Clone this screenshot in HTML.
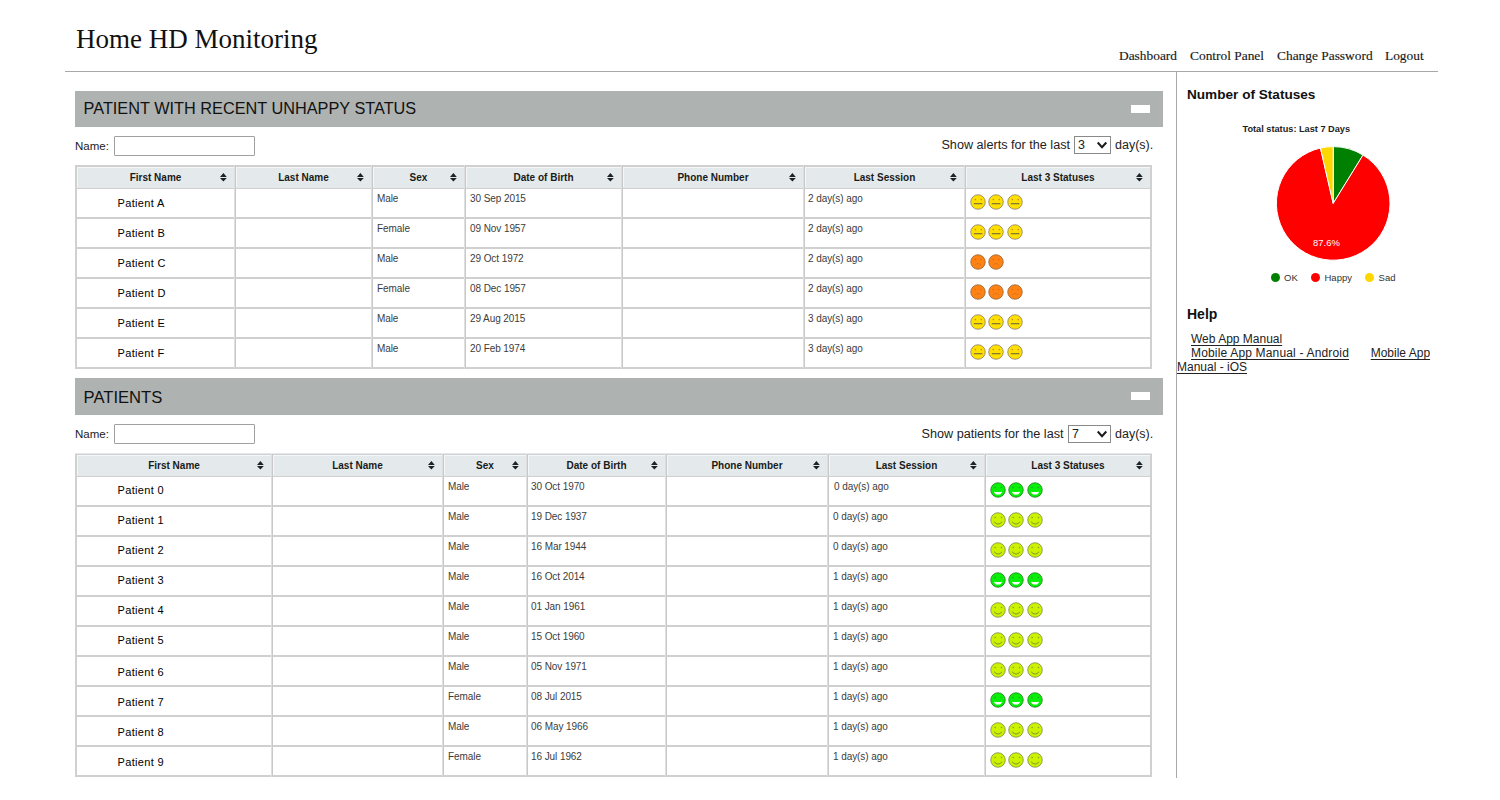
<!DOCTYPE html>
<html><head><meta charset="utf-8"><title>Home HD Monitoring</title>
<style>
html,body{margin:0;padding:0;background:#fff;}
body{width:1500px;height:800px;position:relative;overflow:hidden;}
.t{position:absolute;white-space:nowrap;}
.b{position:absolute;}
u{text-decoration:underline;text-underline-offset:1.5px;text-decoration-skip-ink:none;text-decoration-thickness:1px;}
</style></head><body>
<svg width="0" height="0" style="position:absolute"><defs>
<g id="en"><circle cx="8" cy="8" r="7.25" fill="#ffe000" stroke="#8c7c70" stroke-width="0.8"/><circle cx="5.3" cy="5.6" r="0.8" fill="#c88a3a"/><circle cx="11.3" cy="5.6" r="0.8" fill="#c88a3a"/><path d="M3.8 9.7h8.6" stroke="#6f6a3a" stroke-width="1.1"/></g>
<g id="es"><circle cx="8" cy="8" r="7.25" fill="#ff8212" stroke="#8f6440" stroke-width="0.8"/><circle cx="5.3" cy="5.5" r="0.7" fill="#c46a2a"/><circle cx="11" cy="5.5" r="0.7" fill="#c46a2a"/><path d="M4.8 11.2Q8 7.9 11.2 11.2" fill="none" stroke="#c87434" stroke-width="0.8"/></g>
<g id="eg"><circle cx="8" cy="8" r="7.25" fill="#08f008" stroke="#2a7a2a" stroke-width="0.8"/><circle cx="5" cy="5.5" r="0.8" fill="#2aa02a"/><circle cx="11.4" cy="5.5" r="0.8" fill="#2aa02a"/><path d="M3.9 9.7Q8 10.3 12.1 9.7Q11.2 12.6 8 12.6Q4.8 12.6 3.9 9.7Z" fill="#fff"/></g>
<g id="em"><circle cx="8" cy="8" r="7.25" fill="#ccf200" stroke="#7a8a50" stroke-width="0.8"/><circle cx="5.1" cy="5.4" r="0.75" fill="#8a9a30"/><circle cx="11.5" cy="5.4" r="0.75" fill="#8a9a30"/><path d="M4.1 9.8Q8 14.4 12.1 9.8" fill="none" stroke="#7a8a40" stroke-width="0.9"/></g>
</defs></svg>
<div class="t" style="left:76.00px;top:19.89px;font-family:'Liberation Serif', serif;font-size:27px;line-height:38px;font-weight:normal;color:#111;">Home HD Monitoring</div>
<div class="t" style="left:1119.00px;top:45.98px;font-family:'Liberation Serif', serif;font-size:13.4px;line-height:19px;font-weight:normal;color:#1a1a1a;-webkit-text-stroke:0.15px #1a1a1a;">Dashboard</div>
<div class="t" style="left:1190.00px;top:45.98px;font-family:'Liberation Serif', serif;font-size:13.4px;line-height:19px;font-weight:normal;color:#1a1a1a;-webkit-text-stroke:0.15px #1a1a1a;">Control Panel</div>
<div class="t" style="left:1277.00px;top:45.98px;font-family:'Liberation Serif', serif;font-size:13.4px;line-height:19px;font-weight:normal;color:#1a1a1a;-webkit-text-stroke:0.15px #1a1a1a;">Change Password</div>
<div class="t" style="left:1385.00px;top:45.98px;font-family:'Liberation Serif', serif;font-size:13.4px;line-height:19px;font-weight:normal;color:#1a1a1a;-webkit-text-stroke:0.15px #1a1a1a;">Logout</div>
<div class="b" style="left:65px;top:71px;width:1373px;height:1px;background:#a8a8a8"></div>
<div class="b" style="left:1176px;top:72px;width:1px;height:706px;background:#a8a8a8"></div>
<div class="b" style="left:75px;top:91px;width:1088px;height:36px;background:#aeb2b1"></div>
<div class="t" style="left:83.60px;top:97.05px;font-family:'Liberation Sans', sans-serif;font-size:16.3px;line-height:23px;font-weight:normal;color:#111;">PATIENT WITH RECENT UNHAPPY STATUS</div>
<div class="b" style="left:1131px;top:105px;width:19px;height:8px;background:#fff"></div>
<div class="t" style="left:75.00px;top:138.02px;font-family:'Liberation Sans', sans-serif;font-size:11.5px;line-height:16px;font-weight:normal;color:#222;">Name:</div>
<div class="b" style="left:114px;top:136px;width:141px;height:20px;border:1px solid #a0a0a0;box-sizing:border-box;border-radius:1px;background:#fff"></div>
<div class="t" style="right:430.00px;top:135.82px;font-family:'Liberation Sans', sans-serif;font-size:12.65px;line-height:18px;font-weight:normal;color:#222;">Show alerts for the last</div>
<div class="b" style="left:1074px;top:136px;width:37px;height:18px;border:1px solid #8a8a8a;box-sizing:border-box;background:#fff"></div>
<div class="t" style="left:1078.00px;top:136.17px;font-family:'Liberation Sans', sans-serif;font-size:12.5px;line-height:18px;font-weight:normal;color:#222;">3</div>
<svg class="b" style="left:1097px;top:141px" width="11" height="8" viewBox="0 0 11 8"><path d="M0.7 1.5L5 6.2L9.3 1.5" fill="none" stroke="#1a1a1a" stroke-width="2"/></svg>
<div class="t" style="left:1115.00px;top:135.87px;font-family:'Liberation Sans', sans-serif;font-size:12.5px;line-height:18px;font-weight:normal;color:#222;">day(s).</div>
<div class="b" style="left:75px;top:165px;width:1077px;height:24px;background:#e4eaeb"></div>
<div class="b" style="left:77px;top:167px;width:1px;height:20px;background:#f4f7f7"></div>
<div class="b" style="left:236px;top:167px;width:1px;height:20px;background:#f4f7f7"></div>
<div class="b" style="left:373px;top:167px;width:1px;height:20px;background:#f4f7f7"></div>
<div class="b" style="left:466px;top:167px;width:1px;height:20px;background:#f4f7f7"></div>
<div class="b" style="left:623px;top:167px;width:1px;height:20px;background:#f4f7f7"></div>
<div class="b" style="left:805px;top:167px;width:1px;height:20px;background:#f4f7f7"></div>
<div class="b" style="left:966px;top:167px;width:1px;height:20px;background:#f4f7f7"></div>
<div class="b" style="left:77px;top:167px;width:1073px;height:1px;background:#f4f7f7"></div>
<div class="b" style="left:75px;top:165px;width:1077px;height:2px;background:#d0d0d0"></div>
<div class="b" style="left:75px;top:188px;width:1077px;height:1px;background:#d0d0d0"></div>
<div class="b" style="left:75px;top:217px;width:1077px;height:2px;background:#d0d0d0"></div>
<div class="b" style="left:75px;top:247px;width:1077px;height:2px;background:#d0d0d0"></div>
<div class="b" style="left:75px;top:277px;width:1077px;height:2px;background:#d0d0d0"></div>
<div class="b" style="left:75px;top:307px;width:1077px;height:2px;background:#d0d0d0"></div>
<div class="b" style="left:75px;top:337px;width:1077px;height:2px;background:#d0d0d0"></div>
<div class="b" style="left:75px;top:367px;width:1077px;height:2px;background:#d0d0d0"></div>
<div class="b" style="left:75px;top:165px;width:2px;height:204px;background:#d0d0d0"></div>
<div class="b" style="left:234px;top:165px;width:1px;height:204px;background:#dedede"></div>
<div class="b" style="left:235px;top:165px;width:1px;height:204px;background:#c9c9c9"></div>
<div class="b" style="left:371px;top:165px;width:1px;height:204px;background:#dedede"></div>
<div class="b" style="left:372px;top:165px;width:1px;height:204px;background:#c9c9c9"></div>
<div class="b" style="left:464px;top:165px;width:1px;height:204px;background:#dedede"></div>
<div class="b" style="left:465px;top:165px;width:1px;height:204px;background:#c9c9c9"></div>
<div class="b" style="left:621px;top:165px;width:1px;height:204px;background:#dedede"></div>
<div class="b" style="left:622px;top:165px;width:1px;height:204px;background:#c9c9c9"></div>
<div class="b" style="left:803px;top:165px;width:1px;height:204px;background:#dedede"></div>
<div class="b" style="left:804px;top:165px;width:1px;height:204px;background:#c9c9c9"></div>
<div class="b" style="left:964px;top:165px;width:1px;height:204px;background:#dedede"></div>
<div class="b" style="left:965px;top:165px;width:1px;height:204px;background:#c9c9c9"></div>
<div class="b" style="left:1150px;top:165px;width:2px;height:204px;background:#d0d0d0"></div>
<div class="t" style="left:77.00px;width:157px;text-align:center;top:170.53px;font-family:'Liberation Sans', sans-serif;font-size:10px;line-height:14px;font-weight:bold;color:#1a1a1a;">First Name</div>
<svg class="b" style="left:220px;top:173px" width="8" height="9" viewBox="0 0 8 9"><path d="M0 4.1L3.4 0L6.8 4.1Z M0 5L3.4 8.4L6.8 5Z" fill="#1c2326"/></svg>
<div class="t" style="left:236.00px;width:135px;text-align:center;top:170.53px;font-family:'Liberation Sans', sans-serif;font-size:10px;line-height:14px;font-weight:bold;color:#1a1a1a;">Last Name</div>
<svg class="b" style="left:357px;top:173px" width="8" height="9" viewBox="0 0 8 9"><path d="M0 4.1L3.4 0L6.8 4.1Z M0 5L3.4 8.4L6.8 5Z" fill="#1c2326"/></svg>
<div class="t" style="left:373.00px;width:91px;text-align:center;top:170.53px;font-family:'Liberation Sans', sans-serif;font-size:10px;line-height:14px;font-weight:bold;color:#1a1a1a;">Sex</div>
<svg class="b" style="left:450px;top:173px" width="8" height="9" viewBox="0 0 8 9"><path d="M0 4.1L3.4 0L6.8 4.1Z M0 5L3.4 8.4L6.8 5Z" fill="#1c2326"/></svg>
<div class="t" style="left:466.00px;width:155px;text-align:center;top:170.53px;font-family:'Liberation Sans', sans-serif;font-size:10px;line-height:14px;font-weight:bold;color:#1a1a1a;">Date of Birth</div>
<svg class="b" style="left:607px;top:173px" width="8" height="9" viewBox="0 0 8 9"><path d="M0 4.1L3.4 0L6.8 4.1Z M0 5L3.4 8.4L6.8 5Z" fill="#1c2326"/></svg>
<div class="t" style="left:623.00px;width:180px;text-align:center;top:170.53px;font-family:'Liberation Sans', sans-serif;font-size:10px;line-height:14px;font-weight:bold;color:#1a1a1a;">Phone Number</div>
<svg class="b" style="left:789px;top:173px" width="8" height="9" viewBox="0 0 8 9"><path d="M0 4.1L3.4 0L6.8 4.1Z M0 5L3.4 8.4L6.8 5Z" fill="#1c2326"/></svg>
<div class="t" style="left:805.00px;width:159px;text-align:center;top:170.53px;font-family:'Liberation Sans', sans-serif;font-size:10px;line-height:14px;font-weight:bold;color:#1a1a1a;">Last Session</div>
<svg class="b" style="left:950px;top:173px" width="8" height="9" viewBox="0 0 8 9"><path d="M0 4.1L3.4 0L6.8 4.1Z M0 5L3.4 8.4L6.8 5Z" fill="#1c2326"/></svg>
<div class="t" style="left:966.00px;width:184px;text-align:center;top:170.53px;font-family:'Liberation Sans', sans-serif;font-size:10px;line-height:14px;font-weight:bold;color:#1a1a1a;">Last 3 Statuses</div>
<svg class="b" style="left:1136px;top:173px" width="8" height="9" viewBox="0 0 8 9"><path d="M0 4.1L3.4 0L6.8 4.1Z M0 5L3.4 8.4L6.8 5Z" fill="#1c2326"/></svg>
<div class="t" style="left:117.50px;top:196.19px;font-family:'Liberation Sans', sans-serif;font-size:11px;line-height:15px;font-weight:normal;color:#000;letter-spacing:0.35px;">Patient A</div>
<div class="t" style="left:377.00px;top:191.53px;font-family:'Liberation Sans', sans-serif;font-size:10px;line-height:14px;font-weight:normal;color:#3c3c3c;letter-spacing:-0.08px;">Male</div>
<div class="t" style="left:470.00px;top:191.53px;font-family:'Liberation Sans', sans-serif;font-size:10px;line-height:14px;font-weight:normal;color:#3c3c3c;letter-spacing:-0.08px;">30 Sep 2015</div>
<div class="t" style="left:808.00px;top:191.53px;font-family:'Liberation Sans', sans-serif;font-size:10px;line-height:14px;font-weight:normal;color:#3c3c3c;letter-spacing:-0.08px;">2 day(s) ago</div>
<svg class="b" style="left:970.0px;top:194px" width="16" height="16" viewBox="0 0 16 16"><use href="#en"/></svg>
<svg class="b" style="left:988.4px;top:194px" width="16" height="16" viewBox="0 0 16 16"><use href="#en"/></svg>
<svg class="b" style="left:1006.8px;top:194px" width="16" height="16" viewBox="0 0 16 16"><use href="#en"/></svg>
<div class="t" style="left:117.50px;top:226.19px;font-family:'Liberation Sans', sans-serif;font-size:11px;line-height:15px;font-weight:normal;color:#000;letter-spacing:0.35px;">Patient B</div>
<div class="t" style="left:377.00px;top:221.53px;font-family:'Liberation Sans', sans-serif;font-size:10px;line-height:14px;font-weight:normal;color:#3c3c3c;letter-spacing:-0.08px;">Female</div>
<div class="t" style="left:470.00px;top:221.53px;font-family:'Liberation Sans', sans-serif;font-size:10px;line-height:14px;font-weight:normal;color:#3c3c3c;letter-spacing:-0.08px;">09 Nov 1957</div>
<div class="t" style="left:808.00px;top:221.53px;font-family:'Liberation Sans', sans-serif;font-size:10px;line-height:14px;font-weight:normal;color:#3c3c3c;letter-spacing:-0.08px;">2 day(s) ago</div>
<svg class="b" style="left:970.0px;top:224px" width="16" height="16" viewBox="0 0 16 16"><use href="#en"/></svg>
<svg class="b" style="left:988.4px;top:224px" width="16" height="16" viewBox="0 0 16 16"><use href="#en"/></svg>
<svg class="b" style="left:1006.8px;top:224px" width="16" height="16" viewBox="0 0 16 16"><use href="#en"/></svg>
<div class="t" style="left:117.50px;top:256.19px;font-family:'Liberation Sans', sans-serif;font-size:11px;line-height:15px;font-weight:normal;color:#000;letter-spacing:0.35px;">Patient C</div>
<div class="t" style="left:377.00px;top:251.53px;font-family:'Liberation Sans', sans-serif;font-size:10px;line-height:14px;font-weight:normal;color:#3c3c3c;letter-spacing:-0.08px;">Male</div>
<div class="t" style="left:470.00px;top:251.53px;font-family:'Liberation Sans', sans-serif;font-size:10px;line-height:14px;font-weight:normal;color:#3c3c3c;letter-spacing:-0.08px;">29 Oct 1972</div>
<div class="t" style="left:808.00px;top:251.53px;font-family:'Liberation Sans', sans-serif;font-size:10px;line-height:14px;font-weight:normal;color:#3c3c3c;letter-spacing:-0.08px;">2 day(s) ago</div>
<svg class="b" style="left:970.0px;top:254px" width="16" height="16" viewBox="0 0 16 16"><use href="#es"/></svg>
<svg class="b" style="left:988.4px;top:254px" width="16" height="16" viewBox="0 0 16 16"><use href="#es"/></svg>
<div class="t" style="left:117.50px;top:286.19px;font-family:'Liberation Sans', sans-serif;font-size:11px;line-height:15px;font-weight:normal;color:#000;letter-spacing:0.35px;">Patient D</div>
<div class="t" style="left:377.00px;top:281.54px;font-family:'Liberation Sans', sans-serif;font-size:10px;line-height:14px;font-weight:normal;color:#3c3c3c;letter-spacing:-0.08px;">Female</div>
<div class="t" style="left:470.00px;top:281.54px;font-family:'Liberation Sans', sans-serif;font-size:10px;line-height:14px;font-weight:normal;color:#3c3c3c;letter-spacing:-0.08px;">08 Dec 1957</div>
<div class="t" style="left:808.00px;top:281.54px;font-family:'Liberation Sans', sans-serif;font-size:10px;line-height:14px;font-weight:normal;color:#3c3c3c;letter-spacing:-0.08px;">2 day(s) ago</div>
<svg class="b" style="left:970.0px;top:284px" width="16" height="16" viewBox="0 0 16 16"><use href="#es"/></svg>
<svg class="b" style="left:988.4px;top:284px" width="16" height="16" viewBox="0 0 16 16"><use href="#es"/></svg>
<svg class="b" style="left:1006.8px;top:284px" width="16" height="16" viewBox="0 0 16 16"><use href="#es"/></svg>
<div class="t" style="left:117.50px;top:316.19px;font-family:'Liberation Sans', sans-serif;font-size:11px;line-height:15px;font-weight:normal;color:#000;letter-spacing:0.35px;">Patient E</div>
<div class="t" style="left:377.00px;top:311.54px;font-family:'Liberation Sans', sans-serif;font-size:10px;line-height:14px;font-weight:normal;color:#3c3c3c;letter-spacing:-0.08px;">Male</div>
<div class="t" style="left:470.00px;top:311.54px;font-family:'Liberation Sans', sans-serif;font-size:10px;line-height:14px;font-weight:normal;color:#3c3c3c;letter-spacing:-0.08px;">29 Aug 2015</div>
<div class="t" style="left:808.00px;top:311.54px;font-family:'Liberation Sans', sans-serif;font-size:10px;line-height:14px;font-weight:normal;color:#3c3c3c;letter-spacing:-0.08px;">3 day(s) ago</div>
<svg class="b" style="left:970.0px;top:314px" width="16" height="16" viewBox="0 0 16 16"><use href="#en"/></svg>
<svg class="b" style="left:988.4px;top:314px" width="16" height="16" viewBox="0 0 16 16"><use href="#en"/></svg>
<svg class="b" style="left:1006.8px;top:314px" width="16" height="16" viewBox="0 0 16 16"><use href="#en"/></svg>
<div class="t" style="left:117.50px;top:346.19px;font-family:'Liberation Sans', sans-serif;font-size:11px;line-height:15px;font-weight:normal;color:#000;letter-spacing:0.35px;">Patient F</div>
<div class="t" style="left:377.00px;top:341.54px;font-family:'Liberation Sans', sans-serif;font-size:10px;line-height:14px;font-weight:normal;color:#3c3c3c;letter-spacing:-0.08px;">Male</div>
<div class="t" style="left:470.00px;top:341.54px;font-family:'Liberation Sans', sans-serif;font-size:10px;line-height:14px;font-weight:normal;color:#3c3c3c;letter-spacing:-0.08px;">20 Feb 1974</div>
<div class="t" style="left:808.00px;top:341.54px;font-family:'Liberation Sans', sans-serif;font-size:10px;line-height:14px;font-weight:normal;color:#3c3c3c;letter-spacing:-0.08px;">3 day(s) ago</div>
<svg class="b" style="left:970.0px;top:344px" width="16" height="16" viewBox="0 0 16 16"><use href="#en"/></svg>
<svg class="b" style="left:988.4px;top:344px" width="16" height="16" viewBox="0 0 16 16"><use href="#en"/></svg>
<svg class="b" style="left:1006.8px;top:344px" width="16" height="16" viewBox="0 0 16 16"><use href="#en"/></svg>
<div class="b" style="left:75px;top:378px;width:1088px;height:37px;background:#aeb2b1"></div>
<div class="t" style="left:83.60px;top:385.55px;font-family:'Liberation Sans', sans-serif;font-size:16.6px;line-height:23px;font-weight:normal;color:#111;">PATIENTS</div>
<div class="b" style="left:1131px;top:392px;width:19px;height:8px;background:#fff"></div>
<div class="t" style="left:75.00px;top:426.02px;font-family:'Liberation Sans', sans-serif;font-size:11.5px;line-height:16px;font-weight:normal;color:#222;">Name:</div>
<div class="b" style="left:114px;top:424px;width:141px;height:20px;border:1px solid #a0a0a0;box-sizing:border-box;border-radius:1px;background:#fff"></div>
<div class="t" style="right:436.50px;top:424.62px;font-family:'Liberation Sans', sans-serif;font-size:12.65px;line-height:18px;font-weight:normal;color:#222;">Show patients for the last</div>
<div class="b" style="left:1068px;top:425px;width:43px;height:18px;border:1px solid #8a8a8a;box-sizing:border-box;background:#fff"></div>
<div class="t" style="left:1072.00px;top:425.17px;font-family:'Liberation Sans', sans-serif;font-size:12.5px;line-height:18px;font-weight:normal;color:#222;">7</div>
<svg class="b" style="left:1097px;top:430px" width="11" height="8" viewBox="0 0 11 8"><path d="M0.7 1.5L5 6.2L9.3 1.5" fill="none" stroke="#1a1a1a" stroke-width="2"/></svg>
<div class="t" style="left:1115.00px;top:424.67px;font-family:'Liberation Sans', sans-serif;font-size:12.5px;line-height:18px;font-weight:normal;color:#222;">day(s).</div>
<div class="b" style="left:75px;top:453px;width:1077px;height:24px;background:#e4eaeb"></div>
<div class="b" style="left:77px;top:455px;width:1px;height:20px;background:#f4f7f7"></div>
<div class="b" style="left:273px;top:455px;width:1px;height:20px;background:#f4f7f7"></div>
<div class="b" style="left:444px;top:455px;width:1px;height:20px;background:#f4f7f7"></div>
<div class="b" style="left:528px;top:455px;width:1px;height:20px;background:#f4f7f7"></div>
<div class="b" style="left:667px;top:455px;width:1px;height:20px;background:#f4f7f7"></div>
<div class="b" style="left:829px;top:455px;width:1px;height:20px;background:#f4f7f7"></div>
<div class="b" style="left:986px;top:455px;width:1px;height:20px;background:#f4f7f7"></div>
<div class="b" style="left:77px;top:455px;width:1073px;height:1px;background:#f4f7f7"></div>
<div class="b" style="left:75px;top:454px;width:1077px;height:1px;background:#d0d0d0"></div>
<div class="b" style="left:75px;top:476px;width:1077px;height:1px;background:#d0d0d0"></div>
<div class="b" style="left:75px;top:505px;width:1077px;height:2px;background:#d0d0d0"></div>
<div class="b" style="left:75px;top:535px;width:1077px;height:2px;background:#d0d0d0"></div>
<div class="b" style="left:75px;top:565px;width:1077px;height:2px;background:#d0d0d0"></div>
<div class="b" style="left:75px;top:595px;width:1077px;height:2px;background:#d0d0d0"></div>
<div class="b" style="left:75px;top:625px;width:1077px;height:2px;background:#d0d0d0"></div>
<div class="b" style="left:75px;top:655px;width:1077px;height:2px;background:#d0d0d0"></div>
<div class="b" style="left:75px;top:685px;width:1077px;height:2px;background:#d0d0d0"></div>
<div class="b" style="left:75px;top:715px;width:1077px;height:2px;background:#d0d0d0"></div>
<div class="b" style="left:75px;top:745px;width:1077px;height:2px;background:#d0d0d0"></div>
<div class="b" style="left:75px;top:775px;width:1077px;height:2px;background:#d0d0d0"></div>
<div class="b" style="left:75px;top:454px;width:2px;height:323px;background:#d0d0d0"></div>
<div class="b" style="left:271px;top:454px;width:1px;height:323px;background:#dedede"></div>
<div class="b" style="left:272px;top:454px;width:1px;height:323px;background:#c9c9c9"></div>
<div class="b" style="left:442px;top:454px;width:1px;height:323px;background:#dedede"></div>
<div class="b" style="left:443px;top:454px;width:1px;height:323px;background:#c9c9c9"></div>
<div class="b" style="left:526px;top:454px;width:1px;height:323px;background:#dedede"></div>
<div class="b" style="left:527px;top:454px;width:1px;height:323px;background:#c9c9c9"></div>
<div class="b" style="left:665px;top:454px;width:1px;height:323px;background:#dedede"></div>
<div class="b" style="left:666px;top:454px;width:1px;height:323px;background:#c9c9c9"></div>
<div class="b" style="left:827px;top:454px;width:1px;height:323px;background:#dedede"></div>
<div class="b" style="left:828px;top:454px;width:1px;height:323px;background:#c9c9c9"></div>
<div class="b" style="left:984px;top:454px;width:1px;height:323px;background:#dedede"></div>
<div class="b" style="left:985px;top:454px;width:1px;height:323px;background:#c9c9c9"></div>
<div class="b" style="left:1150px;top:454px;width:2px;height:323px;background:#d0d0d0"></div>
<div class="t" style="left:77.00px;width:194px;text-align:center;top:458.54px;font-family:'Liberation Sans', sans-serif;font-size:10px;line-height:14px;font-weight:bold;color:#1a1a1a;">First Name</div>
<svg class="b" style="left:257px;top:461px" width="8" height="9" viewBox="0 0 8 9"><path d="M0 4.1L3.4 0L6.8 4.1Z M0 5L3.4 8.4L6.8 5Z" fill="#1c2326"/></svg>
<div class="t" style="left:273.00px;width:169px;text-align:center;top:458.54px;font-family:'Liberation Sans', sans-serif;font-size:10px;line-height:14px;font-weight:bold;color:#1a1a1a;">Last Name</div>
<svg class="b" style="left:428px;top:461px" width="8" height="9" viewBox="0 0 8 9"><path d="M0 4.1L3.4 0L6.8 4.1Z M0 5L3.4 8.4L6.8 5Z" fill="#1c2326"/></svg>
<div class="t" style="left:444.00px;width:82px;text-align:center;top:458.54px;font-family:'Liberation Sans', sans-serif;font-size:10px;line-height:14px;font-weight:bold;color:#1a1a1a;">Sex</div>
<svg class="b" style="left:512px;top:461px" width="8" height="9" viewBox="0 0 8 9"><path d="M0 4.1L3.4 0L6.8 4.1Z M0 5L3.4 8.4L6.8 5Z" fill="#1c2326"/></svg>
<div class="t" style="left:528.00px;width:137px;text-align:center;top:458.54px;font-family:'Liberation Sans', sans-serif;font-size:10px;line-height:14px;font-weight:bold;color:#1a1a1a;">Date of Birth</div>
<svg class="b" style="left:651px;top:461px" width="8" height="9" viewBox="0 0 8 9"><path d="M0 4.1L3.4 0L6.8 4.1Z M0 5L3.4 8.4L6.8 5Z" fill="#1c2326"/></svg>
<div class="t" style="left:667.00px;width:160px;text-align:center;top:458.54px;font-family:'Liberation Sans', sans-serif;font-size:10px;line-height:14px;font-weight:bold;color:#1a1a1a;">Phone Number</div>
<svg class="b" style="left:813px;top:461px" width="8" height="9" viewBox="0 0 8 9"><path d="M0 4.1L3.4 0L6.8 4.1Z M0 5L3.4 8.4L6.8 5Z" fill="#1c2326"/></svg>
<div class="t" style="left:829.00px;width:155px;text-align:center;top:458.54px;font-family:'Liberation Sans', sans-serif;font-size:10px;line-height:14px;font-weight:bold;color:#1a1a1a;">Last Session</div>
<svg class="b" style="left:970px;top:461px" width="8" height="9" viewBox="0 0 8 9"><path d="M0 4.1L3.4 0L6.8 4.1Z M0 5L3.4 8.4L6.8 5Z" fill="#1c2326"/></svg>
<div class="t" style="left:986.00px;width:164px;text-align:center;top:458.54px;font-family:'Liberation Sans', sans-serif;font-size:10px;line-height:14px;font-weight:bold;color:#1a1a1a;">Last 3 Statuses</div>
<svg class="b" style="left:1136px;top:461px" width="8" height="9" viewBox="0 0 8 9"><path d="M0 4.1L3.4 0L6.8 4.1Z M0 5L3.4 8.4L6.8 5Z" fill="#1c2326"/></svg>
<div class="t" style="left:117.50px;top:483.19px;font-family:'Liberation Sans', sans-serif;font-size:11px;line-height:15px;font-weight:normal;color:#000;letter-spacing:0.35px;">Patient 0</div>
<div class="t" style="left:448.00px;top:479.54px;font-family:'Liberation Sans', sans-serif;font-size:10px;line-height:14px;font-weight:normal;color:#3c3c3c;letter-spacing:-0.08px;">Male</div>
<div class="t" style="left:531.00px;top:479.54px;font-family:'Liberation Sans', sans-serif;font-size:10px;line-height:14px;font-weight:normal;color:#3c3c3c;letter-spacing:-0.08px;">30 Oct 1970</div>
<div class="t" style="left:834.00px;top:479.54px;font-family:'Liberation Sans', sans-serif;font-size:10px;line-height:14px;font-weight:normal;color:#3c3c3c;letter-spacing:-0.08px;">0 day(s) ago</div>
<svg class="b" style="left:990.0px;top:482px" width="16" height="16" viewBox="0 0 16 16"><use href="#eg"/></svg>
<svg class="b" style="left:1008.4px;top:482px" width="16" height="16" viewBox="0 0 16 16"><use href="#eg"/></svg>
<svg class="b" style="left:1026.8px;top:482px" width="16" height="16" viewBox="0 0 16 16"><use href="#eg"/></svg>
<div class="t" style="left:117.50px;top:513.19px;font-family:'Liberation Sans', sans-serif;font-size:11px;line-height:15px;font-weight:normal;color:#000;letter-spacing:0.35px;">Patient 1</div>
<div class="t" style="left:448.00px;top:509.54px;font-family:'Liberation Sans', sans-serif;font-size:10px;line-height:14px;font-weight:normal;color:#3c3c3c;letter-spacing:-0.08px;">Male</div>
<div class="t" style="left:531.00px;top:509.54px;font-family:'Liberation Sans', sans-serif;font-size:10px;line-height:14px;font-weight:normal;color:#3c3c3c;letter-spacing:-0.08px;">19 Dec 1937</div>
<div class="t" style="left:833.00px;top:509.54px;font-family:'Liberation Sans', sans-serif;font-size:10px;line-height:14px;font-weight:normal;color:#3c3c3c;letter-spacing:-0.08px;">0 day(s) ago</div>
<svg class="b" style="left:990.0px;top:512px" width="16" height="16" viewBox="0 0 16 16"><use href="#em"/></svg>
<svg class="b" style="left:1008.4px;top:512px" width="16" height="16" viewBox="0 0 16 16"><use href="#em"/></svg>
<svg class="b" style="left:1026.8px;top:512px" width="16" height="16" viewBox="0 0 16 16"><use href="#em"/></svg>
<div class="t" style="left:117.50px;top:543.19px;font-family:'Liberation Sans', sans-serif;font-size:11px;line-height:15px;font-weight:normal;color:#000;letter-spacing:0.35px;">Patient 2</div>
<div class="t" style="left:448.00px;top:539.53px;font-family:'Liberation Sans', sans-serif;font-size:10px;line-height:14px;font-weight:normal;color:#3c3c3c;letter-spacing:-0.08px;">Male</div>
<div class="t" style="left:531.00px;top:539.53px;font-family:'Liberation Sans', sans-serif;font-size:10px;line-height:14px;font-weight:normal;color:#3c3c3c;letter-spacing:-0.08px;">16 Mar 1944</div>
<div class="t" style="left:833.00px;top:539.53px;font-family:'Liberation Sans', sans-serif;font-size:10px;line-height:14px;font-weight:normal;color:#3c3c3c;letter-spacing:-0.08px;">0 day(s) ago</div>
<svg class="b" style="left:990.0px;top:542px" width="16" height="16" viewBox="0 0 16 16"><use href="#em"/></svg>
<svg class="b" style="left:1008.4px;top:542px" width="16" height="16" viewBox="0 0 16 16"><use href="#em"/></svg>
<svg class="b" style="left:1026.8px;top:542px" width="16" height="16" viewBox="0 0 16 16"><use href="#em"/></svg>
<div class="t" style="left:117.50px;top:573.19px;font-family:'Liberation Sans', sans-serif;font-size:11px;line-height:15px;font-weight:normal;color:#000;letter-spacing:0.35px;">Patient 3</div>
<div class="t" style="left:448.00px;top:569.53px;font-family:'Liberation Sans', sans-serif;font-size:10px;line-height:14px;font-weight:normal;color:#3c3c3c;letter-spacing:-0.08px;">Male</div>
<div class="t" style="left:531.00px;top:569.53px;font-family:'Liberation Sans', sans-serif;font-size:10px;line-height:14px;font-weight:normal;color:#3c3c3c;letter-spacing:-0.08px;">16 Oct 2014</div>
<div class="t" style="left:833.00px;top:569.53px;font-family:'Liberation Sans', sans-serif;font-size:10px;line-height:14px;font-weight:normal;color:#3c3c3c;letter-spacing:-0.08px;">1 day(s) ago</div>
<svg class="b" style="left:990.0px;top:572px" width="16" height="16" viewBox="0 0 16 16"><use href="#eg"/></svg>
<svg class="b" style="left:1008.4px;top:572px" width="16" height="16" viewBox="0 0 16 16"><use href="#eg"/></svg>
<svg class="b" style="left:1026.8px;top:572px" width="16" height="16" viewBox="0 0 16 16"><use href="#eg"/></svg>
<div class="t" style="left:117.50px;top:603.19px;font-family:'Liberation Sans', sans-serif;font-size:11px;line-height:15px;font-weight:normal;color:#000;letter-spacing:0.35px;">Patient 4</div>
<div class="t" style="left:448.00px;top:599.53px;font-family:'Liberation Sans', sans-serif;font-size:10px;line-height:14px;font-weight:normal;color:#3c3c3c;letter-spacing:-0.08px;">Male</div>
<div class="t" style="left:531.00px;top:599.53px;font-family:'Liberation Sans', sans-serif;font-size:10px;line-height:14px;font-weight:normal;color:#3c3c3c;letter-spacing:-0.08px;">01 Jan 1961</div>
<div class="t" style="left:833.00px;top:599.53px;font-family:'Liberation Sans', sans-serif;font-size:10px;line-height:14px;font-weight:normal;color:#3c3c3c;letter-spacing:-0.08px;">1 day(s) ago</div>
<svg class="b" style="left:990.0px;top:602px" width="16" height="16" viewBox="0 0 16 16"><use href="#em"/></svg>
<svg class="b" style="left:1008.4px;top:602px" width="16" height="16" viewBox="0 0 16 16"><use href="#em"/></svg>
<svg class="b" style="left:1026.8px;top:602px" width="16" height="16" viewBox="0 0 16 16"><use href="#em"/></svg>
<div class="t" style="left:117.50px;top:633.19px;font-family:'Liberation Sans', sans-serif;font-size:11px;line-height:15px;font-weight:normal;color:#000;letter-spacing:0.35px;">Patient 5</div>
<div class="t" style="left:448.00px;top:629.53px;font-family:'Liberation Sans', sans-serif;font-size:10px;line-height:14px;font-weight:normal;color:#3c3c3c;letter-spacing:-0.08px;">Male</div>
<div class="t" style="left:531.00px;top:629.53px;font-family:'Liberation Sans', sans-serif;font-size:10px;line-height:14px;font-weight:normal;color:#3c3c3c;letter-spacing:-0.08px;">15 Oct 1960</div>
<div class="t" style="left:833.00px;top:629.53px;font-family:'Liberation Sans', sans-serif;font-size:10px;line-height:14px;font-weight:normal;color:#3c3c3c;letter-spacing:-0.08px;">1 day(s) ago</div>
<svg class="b" style="left:990.0px;top:632px" width="16" height="16" viewBox="0 0 16 16"><use href="#em"/></svg>
<svg class="b" style="left:1008.4px;top:632px" width="16" height="16" viewBox="0 0 16 16"><use href="#em"/></svg>
<svg class="b" style="left:1026.8px;top:632px" width="16" height="16" viewBox="0 0 16 16"><use href="#em"/></svg>
<div class="t" style="left:117.50px;top:665.19px;font-family:'Liberation Sans', sans-serif;font-size:11px;line-height:15px;font-weight:normal;color:#000;letter-spacing:0.35px;">Patient 6</div>
<div class="t" style="left:448.00px;top:659.53px;font-family:'Liberation Sans', sans-serif;font-size:10px;line-height:14px;font-weight:normal;color:#3c3c3c;letter-spacing:-0.08px;">Male</div>
<div class="t" style="left:531.00px;top:659.53px;font-family:'Liberation Sans', sans-serif;font-size:10px;line-height:14px;font-weight:normal;color:#3c3c3c;letter-spacing:-0.08px;">05 Nov 1971</div>
<div class="t" style="left:833.00px;top:659.53px;font-family:'Liberation Sans', sans-serif;font-size:10px;line-height:14px;font-weight:normal;color:#3c3c3c;letter-spacing:-0.08px;">1 day(s) ago</div>
<svg class="b" style="left:990.0px;top:662px" width="16" height="16" viewBox="0 0 16 16"><use href="#em"/></svg>
<svg class="b" style="left:1008.4px;top:662px" width="16" height="16" viewBox="0 0 16 16"><use href="#em"/></svg>
<svg class="b" style="left:1026.8px;top:662px" width="16" height="16" viewBox="0 0 16 16"><use href="#em"/></svg>
<div class="t" style="left:117.50px;top:695.19px;font-family:'Liberation Sans', sans-serif;font-size:11px;line-height:15px;font-weight:normal;color:#000;letter-spacing:0.35px;">Patient 7</div>
<div class="t" style="left:448.00px;top:689.53px;font-family:'Liberation Sans', sans-serif;font-size:10px;line-height:14px;font-weight:normal;color:#3c3c3c;letter-spacing:-0.08px;">Female</div>
<div class="t" style="left:531.00px;top:689.53px;font-family:'Liberation Sans', sans-serif;font-size:10px;line-height:14px;font-weight:normal;color:#3c3c3c;letter-spacing:-0.08px;">08 Jul 2015</div>
<div class="t" style="left:833.00px;top:689.53px;font-family:'Liberation Sans', sans-serif;font-size:10px;line-height:14px;font-weight:normal;color:#3c3c3c;letter-spacing:-0.08px;">1 day(s) ago</div>
<svg class="b" style="left:990.0px;top:692px" width="16" height="16" viewBox="0 0 16 16"><use href="#eg"/></svg>
<svg class="b" style="left:1008.4px;top:692px" width="16" height="16" viewBox="0 0 16 16"><use href="#eg"/></svg>
<svg class="b" style="left:1026.8px;top:692px" width="16" height="16" viewBox="0 0 16 16"><use href="#eg"/></svg>
<div class="t" style="left:117.50px;top:725.19px;font-family:'Liberation Sans', sans-serif;font-size:11px;line-height:15px;font-weight:normal;color:#000;letter-spacing:0.35px;">Patient 8</div>
<div class="t" style="left:448.00px;top:719.53px;font-family:'Liberation Sans', sans-serif;font-size:10px;line-height:14px;font-weight:normal;color:#3c3c3c;letter-spacing:-0.08px;">Male</div>
<div class="t" style="left:531.00px;top:719.53px;font-family:'Liberation Sans', sans-serif;font-size:10px;line-height:14px;font-weight:normal;color:#3c3c3c;letter-spacing:-0.08px;">06 May 1966</div>
<div class="t" style="left:833.00px;top:719.53px;font-family:'Liberation Sans', sans-serif;font-size:10px;line-height:14px;font-weight:normal;color:#3c3c3c;letter-spacing:-0.08px;">1 day(s) ago</div>
<svg class="b" style="left:990.0px;top:722px" width="16" height="16" viewBox="0 0 16 16"><use href="#em"/></svg>
<svg class="b" style="left:1008.4px;top:722px" width="16" height="16" viewBox="0 0 16 16"><use href="#em"/></svg>
<svg class="b" style="left:1026.8px;top:722px" width="16" height="16" viewBox="0 0 16 16"><use href="#em"/></svg>
<div class="t" style="left:117.50px;top:755.19px;font-family:'Liberation Sans', sans-serif;font-size:11px;line-height:15px;font-weight:normal;color:#000;letter-spacing:0.35px;">Patient 9</div>
<div class="t" style="left:448.00px;top:749.53px;font-family:'Liberation Sans', sans-serif;font-size:10px;line-height:14px;font-weight:normal;color:#3c3c3c;letter-spacing:-0.08px;">Female</div>
<div class="t" style="left:531.00px;top:749.53px;font-family:'Liberation Sans', sans-serif;font-size:10px;line-height:14px;font-weight:normal;color:#3c3c3c;letter-spacing:-0.08px;">16 Jul 1962</div>
<div class="t" style="left:833.00px;top:749.53px;font-family:'Liberation Sans', sans-serif;font-size:10px;line-height:14px;font-weight:normal;color:#3c3c3c;letter-spacing:-0.08px;">1 day(s) ago</div>
<svg class="b" style="left:990.0px;top:752px" width="16" height="16" viewBox="0 0 16 16"><use href="#em"/></svg>
<svg class="b" style="left:1008.4px;top:752px" width="16" height="16" viewBox="0 0 16 16"><use href="#em"/></svg>
<svg class="b" style="left:1026.8px;top:752px" width="16" height="16" viewBox="0 0 16 16"><use href="#em"/></svg>
<div class="t" style="left:1187.00px;top:84.79px;font-family:'Liberation Sans', sans-serif;font-size:13.6px;line-height:19px;font-weight:bold;color:#111;">Number of Statuses</div>
<div class="t" style="left:1242.50px;top:123.11px;font-family:'Liberation Sans', sans-serif;font-size:9.2px;line-height:13px;font-weight:bold;color:#222;">Total status: Last 7 Days</div>
<svg class="b" style="left:0;top:0" width="1500" height="800"><path d="M1333.20 203.40L1333.20 146.60A56.8 56.8 0 0 1 1363.03 155.06Z" fill="#008000" stroke="#fff" stroke-width="1"/><path d="M1333.20 203.40L1363.03 155.06A56.8 56.8 0 1 1 1320.46 148.05Z" fill="#ff0000" stroke="#fff" stroke-width="1"/><path d="M1333.20 203.40L1320.46 148.05A56.8 56.8 0 0 1 1333.20 146.60Z" fill="#ffd700" stroke="#fff" stroke-width="1"/></svg>
<div class="t" style="left:1311.40px;width:30px;text-align:center;top:235.71px;font-family:'Liberation Sans', sans-serif;font-size:9.5px;line-height:13px;font-weight:normal;color:#fff;">87.6%</div>
<div class="b" style="left:1270.5px;top:272.5px;width:9px;height:9px;background:#008000;border-radius:50%"></div>
<div class="t" style="left:1284.00px;top:271.21px;font-family:'Liberation Sans', sans-serif;font-size:9.5px;line-height:13px;font-weight:normal;color:#333;">OK</div>
<div class="b" style="left:1311.0px;top:272.5px;width:9px;height:9px;background:#ff0000;border-radius:50%"></div>
<div class="t" style="left:1324.50px;top:271.21px;font-family:'Liberation Sans', sans-serif;font-size:9.5px;line-height:13px;font-weight:normal;color:#333;">Happy</div>
<div class="b" style="left:1365.1px;top:272.5px;width:9px;height:9px;background:#ffd700;border-radius:50%"></div>
<div class="t" style="left:1378.60px;top:271.21px;font-family:'Liberation Sans', sans-serif;font-size:9.5px;line-height:13px;font-weight:normal;color:#333;">Sad</div>
<div class="t" style="left:1187.00px;top:304.15px;font-family:'Liberation Sans', sans-serif;font-size:14px;line-height:20px;font-weight:bold;color:#111;">Help</div>
<div class="t" style="left:1191.00px;top:331.04px;font-family:'Liberation Sans', sans-serif;font-size:12px;line-height:17px;font-weight:normal;color:#222;"><u>Web App Manual</u></div>
<div class="t" style="left:1191.00px;top:345.34px;font-family:'Liberation Sans', sans-serif;font-size:12px;line-height:17px;font-weight:normal;color:#222;letter-spacing:0.17px;"><u>Mobile App Manual - Android</u></div>
<div class="t" style="left:1370.70px;top:345.34px;font-family:'Liberation Sans', sans-serif;font-size:12px;line-height:17px;font-weight:normal;color:#222;"><u>Mobile App</u></div>
<div class="t" style="left:1177.00px;top:359.34px;font-family:'Liberation Sans', sans-serif;font-size:12px;line-height:17px;font-weight:normal;color:#222;"><u>Manual - iOS</u></div>
</body></html>
